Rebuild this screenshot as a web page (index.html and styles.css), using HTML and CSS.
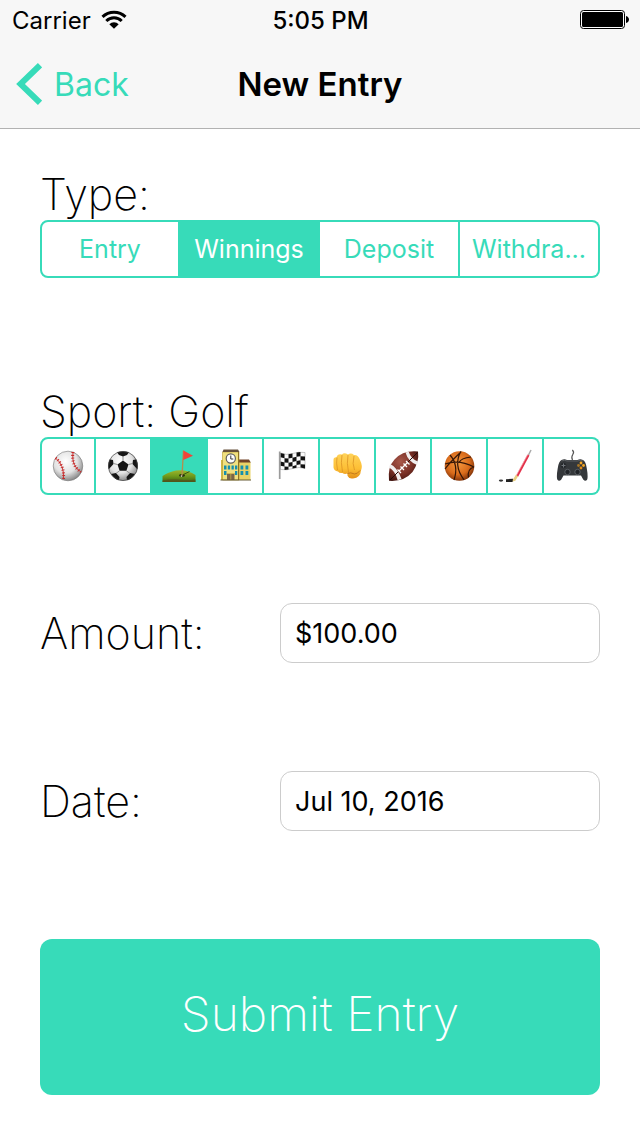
FILE: index.html
```html
<!DOCTYPE html>
<html lang="en">
	<head>
		<meta charset="UTF-8" />
		<meta name="viewport" content="width=device-width, initial-scale=1.0" />
		<title>New Entry</title>
		<link rel="stylesheet" href="styles.css">
	</head>
	<body>
		<header>
			<div class="status">
				<div class="carrier">
					<span>Carrier</span>
					<svg width="26" height="20" viewBox="0 0 26 20">
						<path d="M1.5 6.8a16.5 16.5 0 0 1 23 0M5.3 11a11 11 0 0 1 15.400 0" fill="none" stroke="#000" stroke-width="3" />
						<path d="M8.300 14.200a6.800 6.800 0 0 1 9.400 0L13 18.800z" />
					</svg>
				</div>
				<span class="time">5:05 PM</span>
				<svg class="battery" width="49" height="20" viewBox="0 0 49 20">
					<rect x="0.500" y="0.500" width="44" height="18" rx="3" fill="#fff" stroke="#000" />
					<rect x="2" y="2" width="41" height="15" rx="1.500" />
					<path d="M46 6c4 1 4 6 0 7z" />
				</svg>
			</div>
			<nav>
				<a class="back" href="#">
					<svg width="26" height="42" viewBox="0 0 26 42">
						<path d="M24 2.200L4.500 21 24 39.800" fill="none" stroke="#37dbb9" stroke-width="6" />
					</svg>
					Back
				</a>
				<h1>New Entry</h1>
			</nav>
		</header>
		<form>
			<fieldset>
				<legend>Type:</legend>
				<div class="segments">
					<label><input type="radio" name="type" /><span>Entry</span></label>
					<label><input type="radio" name="type" checked /><span>Winnings</span></label>
					<label><input type="radio" name="type" /><span>Deposit</span></label>
					<label><input type="radio" name="type" /><span>Withdra...</span></label>
				</div>
			</fieldset>
			<fieldset>
				<legend>Sport: Golf</legend>
				<div class="segments">
					<label>
						<input type="radio" name="sport" aria-label="Baseball" />
						<svg viewBox="0 0 34 34">
							<defs>
								<radialGradient id="ball" cx=".42" cy=".35" r=".65">
									<stop offset="0" stop-color="#fff" />
									<stop offset=".6" stop-color="#e2e2e2" />
									<stop offset="1" stop-color="#8b8b8b" />
								</radialGradient>
							</defs>
							<circle cx="17" cy="17" r="14.800" fill="url(#ball)" stroke="#777" stroke-width=".6" />
							<g fill="none" stroke="#c62a2a">
								<path d="M4.500 9q9 7 8 21M22 3q-2 14 8 20" stroke-width=".9" />
								<path d="M4.500 9q9 7 8 21M22 3q-2 14 8 20" stroke-width="3" stroke-dasharray="1 1.800" />
							</g>
						</svg>
					</label>
					<label>
						<input type="radio" name="sport" aria-label="Soccer" />
						<svg viewBox="0 0 34 34">
							<clipPath id="round"><circle cx="17" cy="17" r="14.800" /></clipPath>
							<circle cx="17" cy="17" r="14.800" fill="url(#ball)" />
							<g clip-path="url(#round)">
								<path d="M17 11.500l5.500 4-2.100 6.300h-6.800L11.500 15.500zM10 2h14l-3 4-4 1.500L13 6zM2 10l5 1 .500 4L3 20l-3-1zM32 10l-5 1-.500 4 4.500 5 3-1zM5 25l5-1 3.500 4-1 6zM29 25l-5-1-3.500 4 1 6z" fill="#151515" />
								<path d="M17 11.500V7M22.500 15.500l4-1M20.400 21.800l3.500 2.500M13.600 21.800l-3.500 2.500M11.500 15.500l-4-1" stroke="#777" stroke-width=".8" />
							</g>
							<circle cx="17" cy="17" r="14.600" fill="none" stroke="#444" stroke-width=".7" />
						</svg>
					</label>
					<label>
						<input type="radio" name="sport" aria-label="Golf" checked />
						<svg viewBox="0 0 34 34">
							<defs>
								<linearGradient id="grass" x2="0" y2="1">
									<stop offset="0" stop-color="#9fb52c" />
									<stop offset=".5" stop-color="#6f9a1b" />
									<stop offset="1" stop-color="#3d6512" />
								</linearGradient>
							</defs>
							<path d="M.500 27Q6 23 14 21.500q11-1.500 19.500 4.500v7H.500z" fill="url(#grass)" />
							<path d="M.500 31.500q9-2 17-1t16 0V33H.500z" fill="#5c4a20" opacity=".6" />
							<ellipse cx="20" cy="26.500" rx="3" ry="1.400" fill="#26330b" />
							<circle cx="19.500" cy="27" r=".8" fill="#fff" />
							<path d="M21.500 1.500l-1.500 25" stroke="#b88b4a" stroke-width="1.300" />
							<path d="M21.500 25.500l6-3" stroke="#3e5a10" />
							<path d="M21.500 1.500l9.500 5.200-9.800 4.300z" fill="#f14438" />
						</svg>
					</label>
					<label>
						<input type="radio" name="sport" aria-label="College" />
						<svg viewBox="0 0 34 34">
							<path d="M3 11h3v20H3z" fill="#d3b948" />
							<path d="M20 13h12.500v18H20z" fill="#e9d266" />
							<path d="M20 10.500h11l1.800 3H20z" fill="#704125" />
							<path d="M4.500 3h16.500v28H4.500z" fill="#f0e07f" stroke="#b69930" stroke-width=".6" />
							<path d="M5.500.500h14.500l1.500 2.500h-17z" fill="#66503a" />
							<path d="M20.500 3v28" stroke="#8e7322" />
							<circle cx="12.800" cy="9.500" r="4.600" fill="#fff" stroke="#606060" stroke-width="1.200" />
							<path d="M12.800 6.500v3.500h2.500" fill="none" stroke="#333" stroke-width="1" />
							<path d="M6 16.500h2.500v4H6zM9.800 16.500h2.300v4H9.800zM13.500 16.500h2.300v4h-2.300zM17 16.500h2.300v4H17zM6 22h2.500v4H6zM17 22h2.300v4H17zM22.500 16.500h2.800v4h-2.800zM27.500 16.500h2.800v4h-2.800zM22.500 22h2.800v4h-2.800zM27.500 22h2.800v4h-2.800z" fill="#168fae" />
							<path d="M9 25h7.500v6H9z" fill="#7c6648" />
							<path d="M8.500 24.500h8.500M12.800 25v6" stroke="#c9ad4a" stroke-width=".8" />
							<path d="M2.500 31h30.500" stroke="#665a35" />
						</svg>
					</label>
					<label>
						<input type="radio" name="sport" aria-label="Racing" />
						<svg viewBox="0 0 34 34">
							<path d="M6.500 4q6 2.500 12 .500t12.500-1v16q-6-2-12 0t-12.500 1z" fill="#fafafa" stroke="#777" stroke-width=".4" />
							<path d="M6.500 4l4 1v4.200l-4-.900zM14.500 5.200l4-.700v4.300l-4 .700zM22.500 3.500l4-.400v4.200l-4 .500zM10.500 9.200l4 .300v4.200l-4-.200zM18.500 8.800l4-1v4.200l-4 1zM26.500 7.300l4.500.100v4l-4.500-.100zM6.500 12.400l4 1.100v4l-4-.700zM14.500 13.700l4-.700v4.200l-4 .600zM22.500 12l4-.700v4l-4 .600zM10.500 17.500l4 .300v2.700l-4 .400zM18.500 17.200l4-1.300v2.800l-4 .900zM26.500 15.300l4.500.100v4.100l-4.500-.900z" fill="#111" />
							<path d="M5.700 2.500v27.500" stroke="#9b9b9b" stroke-width="1.700" />
						</svg>
					</label>
					<label>
						<input type="radio" name="sport" aria-label="Fighting" />
						<svg viewBox="0 0 34 34">
							<defs>
								<linearGradient id="skin" x2="0" y2="1">
									<stop offset="0" stop-color="#ffd35a" />
									<stop offset=".6" stop-color="#fdbf35" />
									<stop offset="1" stop-color="#e38f18" />
								</linearGradient>
							</defs>
							<path d="M3.500 11q0-3 3-2.800Q7.500 4.500 12 5.500q2-2.500 6 0 3-2 6 .500 4-.500 6 5 3 6 1 10.500-.500 7-8 8-4 .500-5-2-1-1-.500-3-3 1-5-.500-3 .500-4.500-1.500-4-.500-4.500-4z" fill="url(#skin)" />
							<path d="M7 8.500q-1 5 .500 12.500M12 6q-1.500 7 .500 17M18 6q-1.500 8 .500 17.500M24 7q-2 8 .500 14" fill="none" stroke="#dc9424" stroke-width=".8" />
							<path d="M17.500 24.500q3-1.500 7 .500 3 0 5.500-3.500" fill="none" stroke="#c47a1c" stroke-width="1" />
						</svg>
					</label>
					<label>
						<input type="radio" name="sport" aria-label="Football" />
						<svg viewBox="0 0 34 34">
							<defs>
								<radialGradient id="leather" cx=".4" cy=".35" r=".7">
									<stop offset="0" stop-color="#a8584a" />
									<stop offset=".6" stop-color="#7a3026" />
									<stop offset="1" stop-color="#42140f" />
								</radialGradient>
							</defs>
							<path d="M32 2.500Q33.500 13 26.500 23 18 33 3 31.800 1.500 18 8.500 10.500 17 1 32 2.500z" fill="url(#leather)" />
							<path d="M19.500 3.500l3.200-.800Q25 10 32 12.500l-1 3.500Q22 12.500 19.500 3.500zM3 18.500l1.200-3.500Q11 18 15.500 30l-3.800 1.300Q9 21.500 3 18.500z" fill="#f1eeee" />
							<path d="M4 31L31.500 3.500" stroke="#260b08" stroke-width="1" />
							<path d="M12.500 22.500l9.500-9.500M11.500 20.500l3.500 3.500M14.500 17.500l3.500 3.500M17.500 14.500l3.500 3.500M20 12l3.500 3.500" stroke="#fff" stroke-width="1.300" />
						</svg>
					</label>
					<label>
						<input type="radio" name="sport" aria-label="Basketball" />
						<svg viewBox="0 0 34 34">
							<defs>
								<radialGradient id="orange" cx=".45" cy=".4" r=".6">
									<stop offset="0" stop-color="#f69a3f" />
									<stop offset=".65" stop-color="#d96b1b" />
									<stop offset="1" stop-color="#86360b" />
								</radialGradient>
							</defs>
							<circle cx="17.500" cy="17" r="14.800" fill="url(#orange)" />
							<path d="M3 15q14-5 29 3M19 2.300q-8 14 3 28.500M8 6q9 10 4 25M29 8q-10 1-12 5.500M32 18q-7 2-5.500 10.500M3 20q5-7 16-17" fill="none" stroke="#351607" stroke-width="1.200" />
						</svg>
					</label>
					<label>
						<input type="radio" name="sport" aria-label="Hockey" />
						<svg viewBox="0 0 34 34">
							<path d="M33 1l-2.500 5" stroke="#aaa" stroke-width="1.500" />
							<path d="M30.500 6L19 27.500" stroke="#e3314a" stroke-width="2.200" />
							<path d="M29.500 6L18.500 26" stroke="#f7a3ab" stroke-width=".7" />
							<path d="M19 26.500l-2.500 4.200-3 .8" fill="none" stroke="#e8cf82" stroke-width="2.600" />
							<path d="M8 30.200l7-.500-.500 3.300H8z" fill="#222" />
							<ellipse cx="3" cy="31.600" rx="2.200" ry="1.100" fill="#333" />
						</svg>
					</label>
					<label>
						<input type="radio" name="sport" aria-label="Video games" />
						<svg viewBox="0 0 34 34">
							<path d="M18.500 11q-1.500-3 .3-5.500T18.300 1" fill="none" stroke="#555" stroke-width="1.200" />
							<path d="M7.500 11q3-1.500 5.500 0h10.500q2.500-1.500 5.500 0 2.800 1 3.800 8.500 1.400 8 .4 11-1.700 2.500-4 0L27 26.500H9.500L7.300 30.500q-2.300 2.500-4 0-1-3 .4-11 1-7.500 3.800-8.500z" fill="#35383b" />
							<path d="M7.500 12q3-1.500 5.500 0h10.500q2.500-1.500 5.500 0" fill="none" stroke="#606366" stroke-width=".9" />
							<circle cx="9.500" cy="16.500" r="2.800" fill="#26292c" />
							<path d="M9.500 14.500v4M7.500 16.500h4" stroke="#70757a" stroke-width="1" />
							<circle cx="13.500" cy="23" r="2.700" fill="#202327" stroke="#666b70" stroke-width=".8" />
							<circle cx="23.500" cy="23" r="2.700" fill="#202327" stroke="#666b70" stroke-width=".8" />
							<circle cx="27" cy="14" r="1.400" fill="#f6a623" />
							<circle cx="29.500" cy="16.500" r="1.400" fill="#f6a623" />
							<circle cx="24.500" cy="16.500" r="1.400" fill="#a97524" />
							<circle cx="27" cy="19" r="1.400" fill="#e28b16" />
						</svg>
					</label>
				</div>
			</fieldset>
			<div class="row">
				<label for="amount">Amount:</label>
				<input id="amount" type="text" value="$100.00" />
			</div>
			<div class="row">
				<label for="date">Date:</label>
				<input id="date" type="text" value="Jul 10, 2016" />
			</div>
			<button type="submit">Submit Entry</button>
		</form>
	</body>
</html>
```
FILE: styles.css
```css
* {
	box-sizing: border-box;
}
body {
	margin: 0px;
	background: white;
	color: black;
	font-family: Inter, "Liberation Sans", sans-serif;
}
header {
	background: #f7f7f7;
	border-bottom: 1px solid #b2b2b2;
}
.status,
nav {
	display: grid;
	grid-template-columns: 1fr auto 1fr;
	align-items: center;
}
.status {
	height: 40px;
	padding: 0px 11px 0px 12px;
	font-size: 24px;
}
.carrier {
	display: flex;
	align-items: center;
	gap: 10px;
}
.time {
	font-weight: 500;
}
.battery {
	justify-self: end;
}
nav {
	height: 88px;
	padding: 0px 16px;
}
.back {
	display: flex;
	align-items: center;
	gap: 12px;
	color: #37dbb9;
	font-size: 32px;
	text-decoration: none;
}
h1 {
	margin: 0px;
	font-size: 33px;
	font-weight: 600;
}
form {
	display: flex;
	flex-direction: column;
	gap: 108px;
	padding: 40px;
}
fieldset {
	border: none;
	margin: 0px;
	padding: 0px;
	min-width: 0px;
}
legend,
.row label,
button {
	font-family: Inter, Lato, sans-serif;
	font-size: 43px;
	font-weight: 200;
}
legend {
	padding: 0px;
	height: 51px;
	line-height: 51px;
}
.segments {
	display: grid;
	grid-auto-flow: column;
	grid-auto-columns: minmax(0px, 1fr);
	height: 58px;
}
.segments label {
	position: relative;
	display: flex;
	align-items: center;
	justify-content: center;
	border: 2px solid #37dbb9;
	border-left-width: 0px;
	color: #37dbb9;
	font-size: 25px;
	cursor: pointer;
}
.segments label:first-child {
	border-left-width: 2px;
	border-radius: 8px 0px 0px 8px;
}
.segments label:last-child {
	border-radius: 0px 8px 8px 0px;
}
.segments label:has(input:checked) {
	background: #37dbb9;
	color: white;
}
.segments input {
	position: absolute;
	inset: 0px;
	margin: 0px;
	opacity: 0;
}
.segments svg {
	width: 34px;
	height: 34px;
	flex: none;
}
.row {
	display: grid;
	grid-template-columns: 3fr 4fr;
	align-items: center;
}
.row input {
	width: 100%;
	height: 60px;
	padding: 0px 14px;
	border: 1px solid #cccccc;
	border-radius: 12px;
	background: white;
	color: black;
	font-family: inherit;
	font-size: 27px;
}
button {
	height: 156px;
	padding: 0px 0px 8px;
	border: none;
	border-radius: 12px;
	background: #37dbb9;
	color: white;
	font-size: 48px;
	cursor: pointer;
}
```
